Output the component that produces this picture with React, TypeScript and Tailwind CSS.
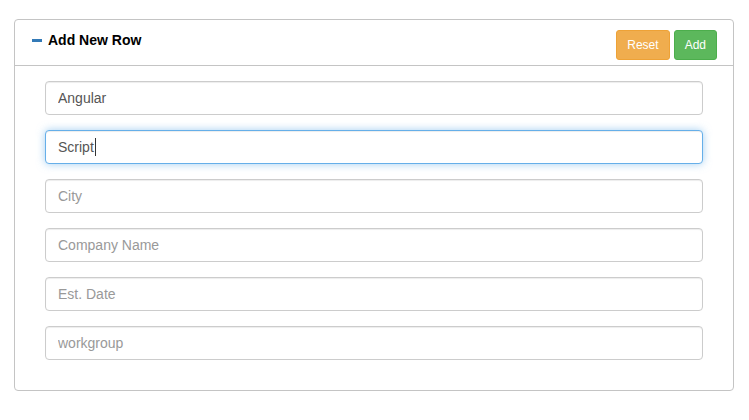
const fields = [
  { value: "Angular", placeholder: "First Name" },
  { value: "Script", placeholder: "Last Name", focused: true },
  { value: "", placeholder: "City" },
  { value: "", placeholder: "Company Name" },
  { value: "", placeholder: "Est. Date" },
  { value: "", placeholder: "workgroup" },
];

function Field({ value, placeholder, focused }: { value: string; placeholder: string; focused?: boolean }) {
  if (focused) {
    return (
      <div className="flex h-[34px] w-full items-center rounded-[4px] border border-[#66afe9] bg-white px-3 text-[14px] text-[#555] shadow-[inset_0_1px_1px_rgba(0,0,0,0.075),0_0_8px_rgba(102,175,233,0.6)]">
        <span>{value}</span>
        <span className="ml-px inline-block h-[18px] w-px bg-[#333]" />
      </div>
    );
  }
  return (
    <input
      readOnly
      defaultValue={value}
      placeholder={placeholder}
      className="block h-[34px] w-full rounded-[4px] border border-[#ccc] bg-white px-3 text-[14px] text-[#555] shadow-[inset_0_1px_1px_rgba(0,0,0,0.075)] outline-none placeholder:text-[#999]"
    />
  );
}

export default function App() {
  return (
    <div className="min-h-[420px] bg-white pt-[19px] pl-[14px] font-['Liberation_Sans',Arial,sans-serif]">
      <div className="w-[720px] rounded-[4px] border border-[#c4c4c4] bg-white">
        <div className="flex h-[46px] items-start justify-between border-b border-[#c4c4c4] pt-[10px] pl-[17px] pr-[16px]">
          <div className="flex items-center text-[14px] leading-[20px] font-bold text-black">
            <span className="mr-[6px] inline-block h-[3px] w-[10px] bg-[#337ab7]" />
            Add New Row
          </div>
          <div className="flex gap-1">
            <button className="h-[30px] rounded-[3px] border border-[#eea236] bg-[#f0ad4e] px-[10px] text-[12px] text-white">
              Reset
            </button>
            <button className="h-[30px] rounded-[3px] border border-[#4cae4c] bg-[#5cb85c] px-[10px] text-[12px] text-white">
              Add
            </button>
          </div>
        </div>
        <div className="flex flex-col gap-[15px] px-[30px] pt-[15px] pb-[30px]">
          {fields.map((f) => (
            <Field key={f.placeholder} {...f} />
          ))}
        </div>
      </div>
    </div>
  );
}
